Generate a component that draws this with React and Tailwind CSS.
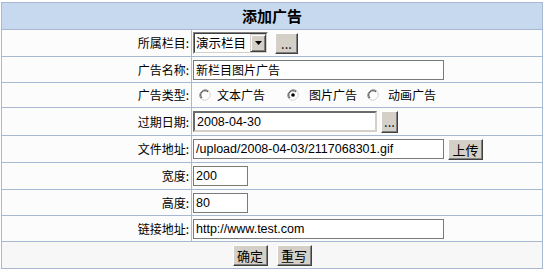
import React from 'react';

const cjk = { fontFamily: '"Noto Sans CJK SC", "Liberation Sans", sans-serif' };
const latin = { fontFamily: '"Liberation Sans", "Noto Sans CJK SC", sans-serif' };

function WinButton({ children, className = '' }) {
  return (
    <button
      type="button"
      style={cjk}
      className={`flex items-center justify-center bg-[#d4d0c8] border border-t-white border-l-white border-b-[#404040] border-r-[#404040] shadow-[inset_-1px_-1px_0_#808080] text-[13px] leading-none text-black ${className}`}
    >
      {children}
    </button>
  );
}

function TextBox({ value, className = '' }) {
  return (
    <input
      readOnly
      value={value}
      style={latin}
      className={`h-[20px] border border-[#7a7a7a] bg-white px-[2px] text-[12.5px] text-black outline-none ${className}`}
    />
  );
}

function Radio({ checked }) {
  return (
    <svg width="12" height="12" viewBox="0 0 12 12" className="shrink-0">
      <circle cx="6" cy="6" r="5" fill="white" />
      <path d="M2.2 9.8 A5.4 5.4 0 0 1 9.8 2.2" fill="none" stroke="#808080" strokeWidth="1" />
      <path d="M9.8 2.2 A5.4 5.4 0 0 1 2.2 9.8" fill="none" stroke="#d4d0c8" strokeWidth="1" />
      <path d="M3 9 A4.2 4.2 0 0 1 9 3" fill="none" stroke="#404040" strokeWidth="1" />
      {checked && <circle cx="6" cy="6" r="1.8" fill="black" />}
    </svg>
  );
}

function Label({ children, className = '' }) {
  return (
    <div style={cjk} className={`bg-[#fcfcfc] flex items-center justify-end pr-[2px] text-[12px] text-black ${className}`}>
      {children}
    </div>
  );
}

function Cell({ children, className = '' }) {
  return <div className={`bg-[#fcfcfc] flex items-center pl-px ${className}`}>{children}</div>;
}

export default function App() {
  return (
    <div className="w-[547px] h-[277px] bg-white pt-[2px] pl-px">
      <div className="w-[542px] grid grid-cols-[189px_350px] gap-px p-px bg-[#a7b8d2]">
        {/* header */}
        <div style={cjk} className="col-span-2 h-[26px] bg-[#c6d9ef] flex items-center justify-center text-[15px] font-bold text-black">
          添加广告
        </div>

        <Label className="h-[26px]">所属栏目:</Label>
        <Cell>
          <div className="flex h-[22px] w-[75px] shrink-0 border border-t-[#808080] border-l-[#808080] border-b-white border-r-white">
            <div className="flex flex-1 min-w-0 border border-t-[#404040] border-l-[#404040] border-b-[#d4d0c8] border-r-[#d4d0c8] bg-white">
              <span style={cjk} className="flex-1 min-w-0 overflow-hidden whitespace-nowrap pl-[1px] text-[12.5px] leading-[18px] text-black">演示栏目</span>
              <div className="w-[16px] shrink-0 bg-[#d4d0c8] border border-t-[#d4d0c8] border-l-[#d4d0c8] border-b-[#404040] border-r-[#404040] shadow-[inset_1px_1px_0_white,inset_-1px_-1px_0_#808080] flex items-center justify-center">
                <svg width="7" height="4" viewBox="0 0 7 4"><path d="M0 0h7L3.5 4z" fill="black" /></svg>
              </div>
            </div>
          </div>
          <WinButton className="ml-[7px] w-[23px] h-[21px] text-[11px] text-[#3a3aa0]">...</WinButton>
        </Cell>

        <Label className="h-[25px]">广告名称:</Label>
        <Cell>
          <input
            readOnly
            value="新栏目图片广告"
            style={cjk}
            className="h-[20px] w-[251px] border border-[#7a7a7a] bg-white px-[2px] text-[12px] text-black outline-none"
          />
        </Cell>

        <Label className="h-[24px]">广告类型:</Label>
        <Cell>
          <div style={cjk} className="flex items-center text-[12px] text-black">
            <span className="ml-[6px] flex"><Radio /></span>
            <span className="ml-[6px]">文本广告</span>
            <span className="ml-[22px] flex"><Radio checked /></span>
            <span className="ml-[10px]">图片广告</span>
            <span className="ml-[10px] flex"><Radio /></span>
            <span className="ml-[9px]">动画广告</span>
          </div>
        </Cell>

        <Label className="h-[27px]">过期日期:</Label>
        <Cell>
          <input
            readOnly
            value="2008-04-30"
            style={latin}
            className="h-[21px] w-[184px] border-2 border-t-[#6b6b6b] border-l-[#6b6b6b] border-b-[#d4d0c8] border-r-[#d4d0c8] bg-white px-[2px] text-[12.5px] text-black outline-none"
          />
          <WinButton className="ml-[4px] w-[17px] h-[22px] text-[11px] text-[#3a3aa0]">...</WinButton>
        </Cell>

        <Label className="h-[26px]">文件地址:</Label>
        <Cell>
          <TextBox value="/upload/2008-04-03/2117068301.gif" className="w-[251px]" />
          <WinButton className="ml-[4px] w-[35px] h-[21px]">上传</WinButton>
        </Cell>

        <Label className="h-[26px]">宽度:</Label>
        <Cell>
          <TextBox value="200" className="w-[55px]" />
        </Cell>

        <Label className="h-[25px]">高度:</Label>
        <Cell>
          <TextBox value="80" className="w-[55px]" />
        </Cell>

        <Label className="h-[25px]">链接地址:</Label>
        <Cell>
          <TextBox value="http://www.test.com" className="w-[251px]" />
        </Cell>

        {/* buttons */}
        <div className="col-span-2 h-[26px] bg-[#f7f7f7] flex items-center justify-center gap-[9px]">
          <WinButton className="w-[35px] h-[21px]">确定</WinButton>
          <WinButton className="w-[35px] h-[21px]">重写</WinButton>
        </div>
      </div>
    </div>
  );
}
